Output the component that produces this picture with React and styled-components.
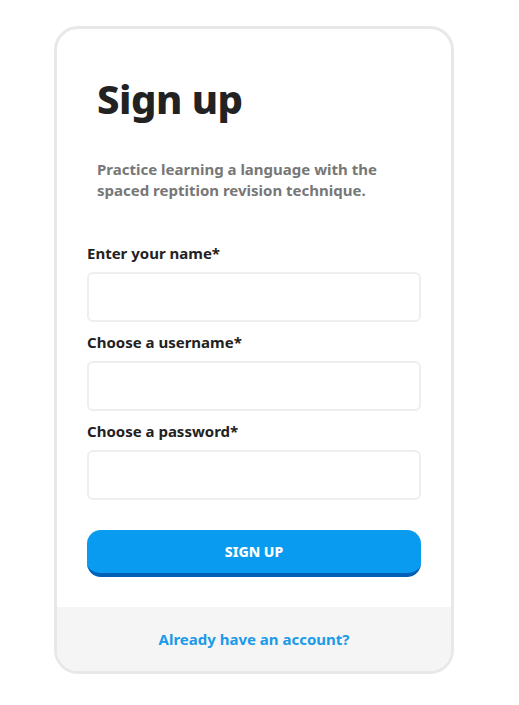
import React from 'react'
import styled, { createGlobalStyle } from 'styled-components'

const GlobalStyle = createGlobalStyle`
    body {
        margin: 0;
        background: #ffffff;
        font-family: 'Noto Sans', 'Open Sans', sans-serif;
        color: #222222;
    }
`

const Page = styled.div`
    padding: 26px 0 32px 54px;
`

const Card = styled.div`
    width: 400px;
    box-sizing: border-box;
    border: 3px solid #e8e8e8;
    border-radius: 24px;
    overflow: hidden;
    background: #ffffff;
`

const Body = styled.div`
    padding: 46px 30px 30px;
`

const Intro = styled.div`
    padding: 0 10px;
`

const Title = styled.h1`
    margin: 0;
    font-size: 40px;
    font-weight: 800;
    line-height: 48px;
    letter-spacing: -0.5px;
    color: #222222;
`

const Lead = styled.p`
    margin: 36px 0 0;
    font-size: 15px;
    font-weight: 700;
    line-height: 21px;
    color: #777777;
`

const Form = styled.form`
    margin-top: 42px;
    display: flex;
    flex-direction: column;
`

const Label = styled.label`
    display: block;
    font-size: 15px;
    font-weight: 700;
    line-height: 20px;
    color: #222222;
    margin-top: ${(p) => (p.$first ? '0' : '10px')};
    margin-bottom: 9px;
`

const Input = styled.input`
    display: block;
    width: 100%;
    height: 50px;
    box-sizing: border-box;
    border: 2px solid #eeeeee;
    border-radius: 6px;
    padding: 0 12px;
    font: inherit;
    font-size: 15px;
    outline: none;
    background: #ffffff;
`

const Submit = styled.button`
    margin-top: 30px;
    height: 47px;
    border: none;
    border-bottom: 4px solid #0060b8;
    border-radius: 14px;
    background: #089bef;
    color: #ffffff;
    font-family: inherit;
    font-size: 14px;
    font-weight: 800;
    cursor: pointer;
`

const Footer = styled.div`
    background: #f5f5f5;
    height: 64px;
    display: flex;
    align-items: center;
    justify-content: center;
`

const FooterLink = styled.a`
    color: #1a9ae8;
    font-size: 15px;
    font-weight: 700;
    text-decoration: none;
`

export default function App() {
    return (
        <Page>
            <GlobalStyle />
            <Card>
                <Body>
                    <Intro>
                        <Title>Sign up</Title>
                        <Lead>
                            Practice learning a language with the spaced reptition revision technique.
                        </Lead>
                    </Intro>
                    <Form onSubmit={(e) => e.preventDefault()}>
                        <Label $first htmlFor="name">Enter your name*</Label>
                        <Input id="name" type="text" />
                        <Label htmlFor="username">Choose a username*</Label>
                        <Input id="username" type="text" />
                        <Label htmlFor="password">Choose a password*</Label>
                        <Input id="password" type="password" />
                        <Submit type="submit">SIGN UP</Submit>
                    </Form>
                </Body>
                <Footer>
                    <FooterLink href="#">Already have an account?</FooterLink>
                </Footer>
            </Card>
        </Page>
    )
}
